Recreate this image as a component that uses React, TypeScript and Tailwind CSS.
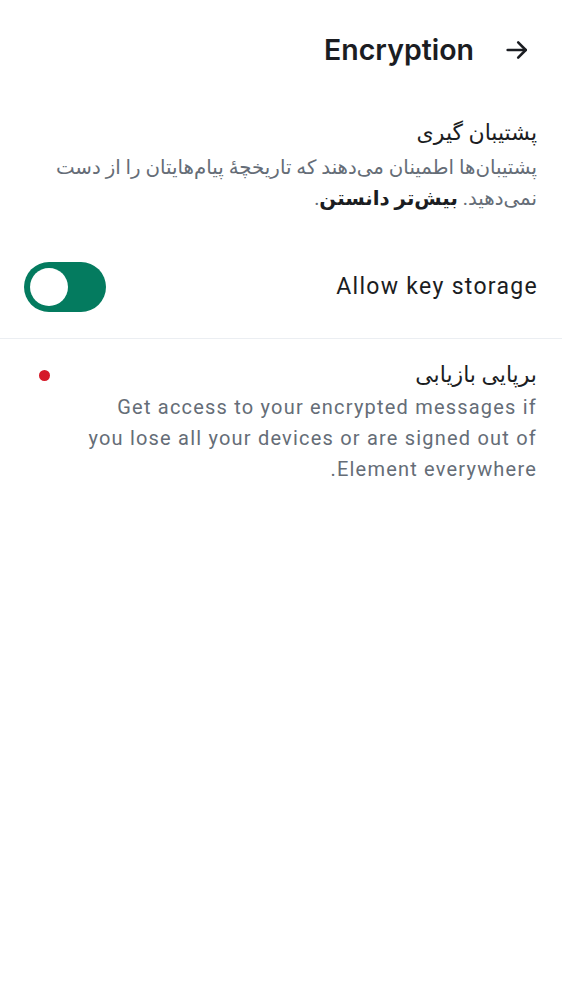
import React, { useState } from 'react';

const BackArrow = () => (
  <svg width="28" height="28" viewBox="0 0 24 24" fill="none" stroke="#1b1d22" strokeWidth="2.2" strokeLinecap="round" strokeLinejoin="round">
    <path d="M4 12h15.5" />
    <path d="M13 5.5l6.5 6.5-6.5 6.5" />
  </svg>
);

export default function App() {
  const [keyStorage, setKeyStorage] = useState(true);

  return (
    <div
      dir="rtl"
      className="min-h-screen w-full bg-white text-[#1b1d22]"
      style={{ fontFamily: 'Roboto, "DejaVu Sans", sans-serif' }}
    >
      <div className="flex h-[100px] items-center gap-[29px] px-[31px]">
        <button className="shrink-0">
          <BackArrow />
        </button>
        <h1 className="text-[28.5px] font-semibold leading-none" style={{ fontFamily: 'Inter, "DejaVu Sans", sans-serif' }}>
          Encryption
        </h1>
      </div>

      <div className="px-[25px] pt-[18px]">
        <h2 className="text-[22px] leading-[30px]">پشتیبان گیری</h2>
        <p className="mt-[4px] text-[19.8px] leading-[31px] text-[#656d77]">
          پشتیبان‌ها اطمینان می‌دهند که تاریخچهٔ پیام‌هایتان را از دست نمی‌دهید.{' '}
          <span className="font-bold text-[#1b1d22]">بیش‌تر دانستن</span>.
        </p>
      </div>

      <div className="flex items-center justify-between border-b border-[#ebeef2] px-[24px] pt-[48px] pb-[26px]">
        <span className="text-[23px] leading-[30px] tracking-[1.3px]">Allow key storage</span>
        <button
          onClick={() => setKeyStorage(!keyStorage)}
          className={`flex h-[50px] w-[82px] items-center rounded-full px-[6px] ${keyStorage ? 'justify-end bg-[#047b5f]' : 'justify-start bg-[#c1c6cd]'}`}
        >
          <span className="block h-[38px] w-[38px] rounded-full bg-white" />
        </button>
      </div>

      <div className="flex items-start gap-[31px] pr-[25px] pl-[39px] pt-[21px]">
        <div className="flex-1">
          <h2 className="text-[22px] leading-[30px]">برپایی بازیابی</h2>
          <p className="mt-[2px] text-[20px] leading-[31px] tracking-[1.2px] text-[#656d77]">
            Get access to your encrypted messages if you lose all your devices or are signed out of Element everywhere.
          </p>
        </div>
        <span className="mt-[10px] block h-[11px] w-[11px] shrink-0 rounded-full bg-[#d51928]" />
      </div>
    </div>
  );
}
